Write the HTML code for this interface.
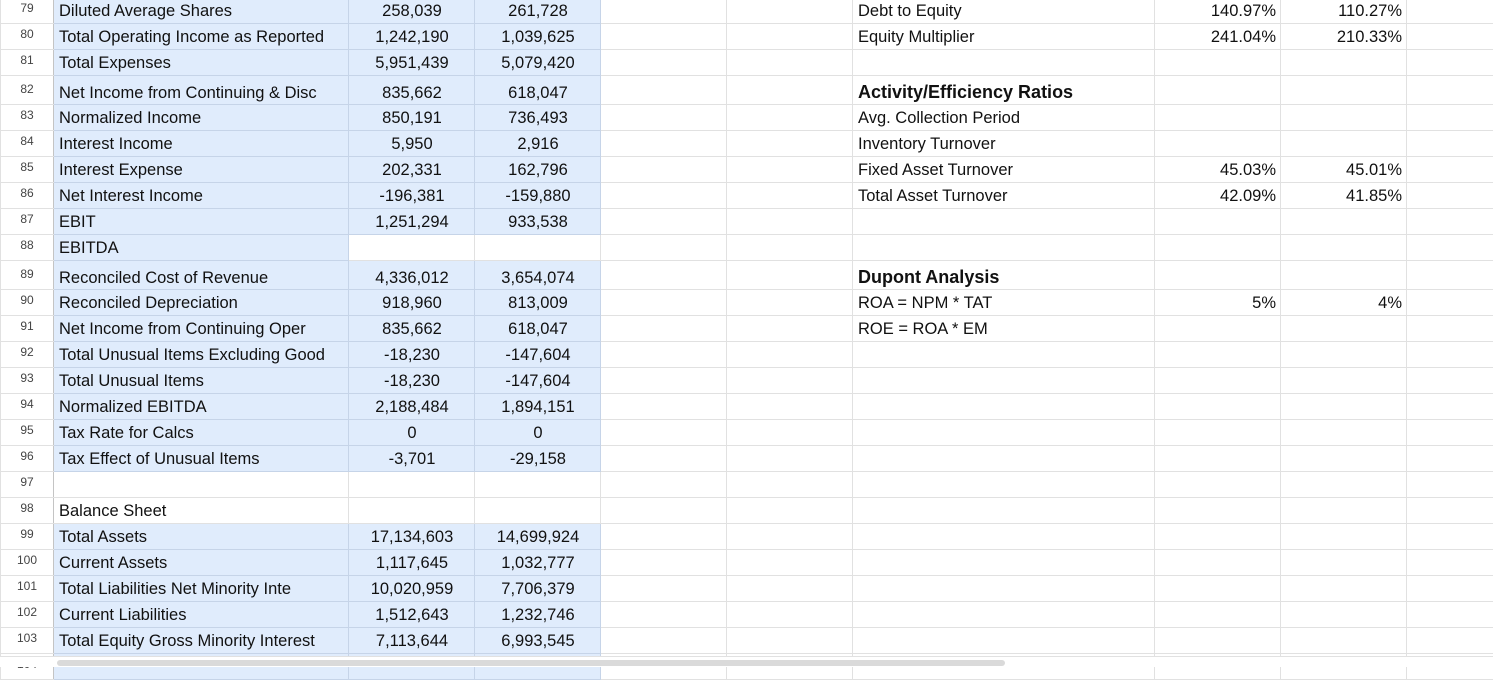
<!DOCTYPE html>
<html><head><meta charset="utf-8"><style>
html,body{margin:0;padding:0;width:1493px;height:664px;overflow:hidden;background:#fff;font-family:"Liberation Sans",Arial,sans-serif;}
table{position:absolute;left:0;top:-3px;border-collapse:collapse;table-layout:fixed;width:1493px;font-size:16.5px;color:#111;}
td{border:1px solid #e1e1e1;padding:0 4px 3px 5px;vertical-align:bottom;white-space:nowrap;overflow:hidden;line-height:18px;}
td.n{font-size:12px;line-height:14px;color:#444;text-align:center;padding:0 0 8px 0;border-right:1px solid #c4c4c4;vertical-align:bottom;}
td.b{background:#e0ecfc;border-color:#c6d4e8;}
td.c{text-align:center;}
td.r{text-align:right;}
tr{height:26px;}
tr.t{height:29px;}
tr.t td{padding-bottom:2px;}
tr.t td.n{padding-bottom:8px;}
b{font-weight:bold;font-size:18px;}
.sb{position:absolute;left:57px;top:660px;width:948px;height:6px;background:#dadada;border-radius:3px;}
.sbl{position:absolute;left:0;top:656px;width:1493px;height:10px;background:#fff;border-top:1px solid #e1e1e1;}
</style></head><body>
<table>
<colgroup><col style="width:53px"><col style="width:295px"><col style="width:126px"><col style="width:126px"><col style="width:126px"><col style="width:126px"><col style="width:302px"><col style="width:126px"><col style="width:126px"><col style="width:87px"></colgroup>
<tr><td class="n">79</td><td class="b">Diluted Average Shares</td><td class="b c">258,039</td><td class="b c">261,728</td><td></td><td></td><td>Debt to Equity</td><td class="r">140.97%</td><td class="r">110.27%</td><td></td></tr>
<tr><td class="n">80</td><td class="b">Total Operating Income as Reported</td><td class="b c">1,242,190</td><td class="b c">1,039,625</td><td></td><td></td><td>Equity Multiplier</td><td class="r">241.04%</td><td class="r">210.33%</td><td></td></tr>
<tr><td class="n">81</td><td class="b">Total Expenses</td><td class="b c">5,951,439</td><td class="b c">5,079,420</td><td></td><td></td><td></td><td></td><td></td><td></td></tr>
<tr class="t"><td class="n">82</td><td class="b">Net Income from Continuing &amp; Disc</td><td class="b c">835,662</td><td class="b c">618,047</td><td></td><td></td><td><b>Activity/Efficiency Ratios</b></td><td></td><td></td><td></td></tr>
<tr><td class="n">83</td><td class="b">Normalized Income</td><td class="b c">850,191</td><td class="b c">736,493</td><td></td><td></td><td>Avg. Collection Period</td><td></td><td></td><td></td></tr>
<tr><td class="n">84</td><td class="b">Interest Income</td><td class="b c">5,950</td><td class="b c">2,916</td><td></td><td></td><td>Inventory Turnover</td><td></td><td></td><td></td></tr>
<tr><td class="n">85</td><td class="b">Interest Expense</td><td class="b c">202,331</td><td class="b c">162,796</td><td></td><td></td><td>Fixed Asset Turnover</td><td class="r">45.03%</td><td class="r">45.01%</td><td></td></tr>
<tr><td class="n">86</td><td class="b">Net Interest Income</td><td class="b c">-196,381</td><td class="b c">-159,880</td><td></td><td></td><td>Total Asset Turnover</td><td class="r">42.09%</td><td class="r">41.85%</td><td></td></tr>
<tr><td class="n">87</td><td class="b">EBIT</td><td class="b c">1,251,294</td><td class="b c">933,538</td><td></td><td></td><td></td><td></td><td></td><td></td></tr>
<tr><td class="n">88</td><td class="b">EBITDA</td><td></td><td></td><td></td><td></td><td></td><td></td><td></td><td></td></tr>
<tr class="t"><td class="n">89</td><td class="b">Reconciled Cost of Revenue</td><td class="b c">4,336,012</td><td class="b c">3,654,074</td><td></td><td></td><td><b>Dupont Analysis</b></td><td></td><td></td><td></td></tr>
<tr><td class="n">90</td><td class="b">Reconciled Depreciation</td><td class="b c">918,960</td><td class="b c">813,009</td><td></td><td></td><td>ROA = NPM * TAT</td><td class="r">5%</td><td class="r">4%</td><td></td></tr>
<tr><td class="n">91</td><td class="b">Net Income from Continuing Oper</td><td class="b c">835,662</td><td class="b c">618,047</td><td></td><td></td><td>ROE = ROA * EM</td><td></td><td></td><td></td></tr>
<tr><td class="n">92</td><td class="b">Total Unusual Items Excluding Good</td><td class="b c">-18,230</td><td class="b c">-147,604</td><td></td><td></td><td></td><td></td><td></td><td></td></tr>
<tr><td class="n">93</td><td class="b">Total Unusual Items</td><td class="b c">-18,230</td><td class="b c">-147,604</td><td></td><td></td><td></td><td></td><td></td><td></td></tr>
<tr><td class="n">94</td><td class="b">Normalized EBITDA</td><td class="b c">2,188,484</td><td class="b c">1,894,151</td><td></td><td></td><td></td><td></td><td></td><td></td></tr>
<tr><td class="n">95</td><td class="b">Tax Rate for Calcs</td><td class="b c">0</td><td class="b c">0</td><td></td><td></td><td></td><td></td><td></td><td></td></tr>
<tr><td class="n">96</td><td class="b">Tax Effect of Unusual Items</td><td class="b c">-3,701</td><td class="b c">-29,158</td><td></td><td></td><td></td><td></td><td></td><td></td></tr>
<tr><td class="n">97</td><td></td><td></td><td></td><td></td><td></td><td></td><td></td><td></td><td></td></tr>
<tr><td class="n">98</td><td>Balance Sheet</td><td></td><td></td><td></td><td></td><td></td><td></td><td></td><td></td></tr>
<tr><td class="n">99</td><td class="b">Total Assets</td><td class="b c">17,134,603</td><td class="b c">14,699,924</td><td></td><td></td><td></td><td></td><td></td><td></td></tr>
<tr><td class="n">100</td><td class="b">Current Assets</td><td class="b c">1,117,645</td><td class="b c">1,032,777</td><td></td><td></td><td></td><td></td><td></td><td></td></tr>
<tr><td class="n">101</td><td class="b">Total Liabilities Net Minority Inte</td><td class="b c">10,020,959</td><td class="b c">7,706,379</td><td></td><td></td><td></td><td></td><td></td><td></td></tr>
<tr><td class="n">102</td><td class="b">Current Liabilities</td><td class="b c">1,512,643</td><td class="b c">1,232,746</td><td></td><td></td><td></td><td></td><td></td><td></td></tr>
<tr><td class="n">103</td><td class="b">Total Equity Gross Minority Interest</td><td class="b c">7,113,644</td><td class="b c">6,993,545</td><td></td><td></td><td></td><td></td><td></td><td></td></tr>
<tr><td class="n">104</td><td class="b"></td><td class="b"></td><td class="b"></td><td></td><td></td><td></td><td></td><td></td><td></td></tr>
</table>
<div class="sbl"></div>
<div class="sb"></div>
</body></html>
